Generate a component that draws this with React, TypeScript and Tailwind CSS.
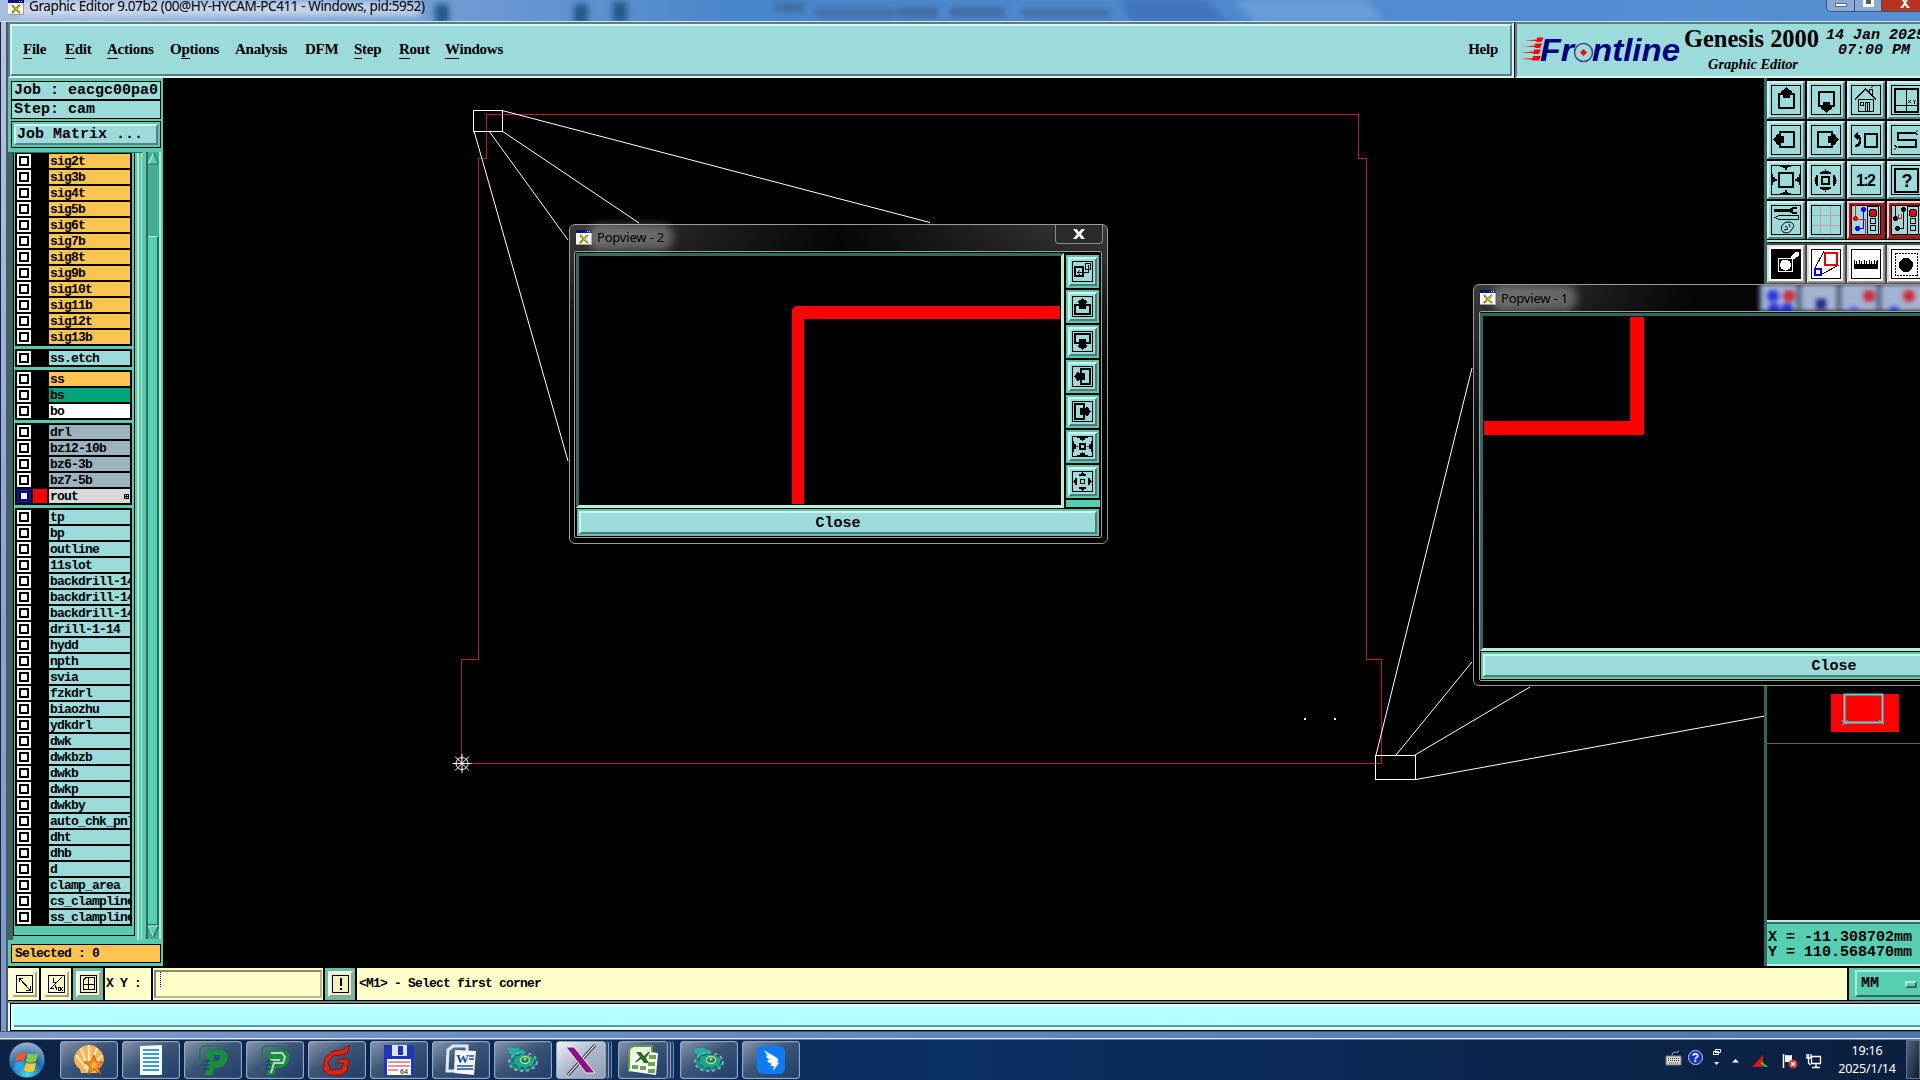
import React from 'react';

interface Layer {
  name: string;
  color: string;
  active?: boolean;
}

const SIG = 'bg-[#fdc44f]';
const AQUA = 'bg-[#9ddbdb]';
const GREY = 'bg-[#9ab3bd]';

const layerGroups: Layer[][] = [
  ['sig2t', 'sig3b', 'sig4t', 'sig5b', 'sig6t', 'sig7b', 'sig8t', 'sig9b', 'sig10t', 'sig11b', 'sig12t', 'sig13b'].map(
    (name) => ({ name, color: SIG })
  ),
  [{ name: 'ss.etch', color: AQUA }],
  [
    { name: 'ss', color: SIG },
    { name: 'bs', color: 'bg-[#00a57c]' },
    { name: 'bo', color: 'bg-white' },
  ],
  [
    { name: 'drl', color: GREY },
    { name: 'bz12-10b', color: GREY },
    { name: 'bz6-3b', color: GREY },
    { name: 'bz7-5b', color: GREY },
    { name: 'rout', color: 'bg-[#d9d9d9]', active: true },
  ],
  [
    'tp', 'bp', 'outline', '11slot', 'backdrill-14', 'backdrill-14', 'backdrill-14', 'drill-1-14', 'hydd', 'npth',
    'svia', 'fzkdrl', 'biaozhu', 'ydkdrl', 'dwk', 'dwkbzb', 'dwkb', 'dwkp', 'dwkby', 'auto_chk_pnl', 'dht', 'dhb',
    'd', 'clamp_area', 'cs_clampline', 'ss_clampline',
  ].map((name) => ({ name, color: AQUA })),
];

const menus = [
  { label: 'File', key: 0, width: 'w-[42px]' },
  { label: 'Edit', key: 0, width: 'w-[42px]' },
  { label: 'Actions', key: 0, width: 'w-[63px]' },
  { label: 'Options', key: 1, width: 'w-[65px]' },
  { label: 'Analysis', key: -1, width: 'w-[70px]' },
  { label: 'DFM', key: -1, width: 'w-[49px]' },
  { label: 'Step', key: 0, width: 'w-[45px]' },
  { label: 'Rout', key: 0, width: 'w-[46px]' },
  { label: 'Windows', key: 0, width: 'w-[70px]' },
];

/* ---------- toolbar glyphs, drawn on a 38px cell ---------- */

const Up = () => (
  <>
    <path d="M16 13H12V27H27V13H23" fill="none" stroke="#000" strokeWidth="2" />
    <path d="M19 6h1v1h1v1h1v1h2v1h1v2h-2v5h-7v-5h-2v-2h1v-1h2v-1h1v-1h1z" />
  </>
);

const Down = () => (
  <g transform="matrix(1 0 0 -1 0 38)">
    <Up />
  </g>
);

const Left = () => (
  <g transform="matrix(0 1 1 0 0 -1)">
    <Up />
  </g>
);

const Right = () => (
  <g transform="matrix(0 1 -1 0 38 -1)">
    <Up />
  </g>
);

const House = () => (
  <g fill="none" stroke="#000">
    <path d="M8 18.500L18.500 8L29 18.500M22.500 11V8.500h3V15M24 7l2-2" />
    <path d="M11.500 18v12.500h15V18M11 18.500h16M13.500 21.500h3v3h-3zM18.500 30v-8.500h4V30M20.500 22v8" />
  </g>
);

const Sheet = () => (
  <>
    <path d="M8 8h23v23H8z" fill="none" stroke="#000" strokeWidth="2" />
    <path d="M19.500 8v23M8 24.500h23" stroke="#000" />
    <path d="M21 19l3 3M24 19l-3 3M26 19l1.500 1.500L29 19M27.500 20v2.500" stroke="#000" fill="none" />
  </>
);

const Undo = () => (
  <>
    <path d="M18 13h12v13H18z" fill="none" stroke="#000" strokeWidth="2" />
    <path d="M9 15h3v2h1v5h-1v2h-2v1H8" fill="none" stroke="#000" strokeWidth="2.500" />
    <path d="M6 15l5-4v8z" />
  </>
);

const Snake = () => (
  <>
    <path d="M28 12H11v7h18v7H11" fill="none" stroke="#000" strokeWidth="2" />
    <path d="M28 12l3-3M28 12l3 2M10 26l-3-2M10 26l-3 3" stroke="#000" />
  </>
);

const ZoomOutAll = () => (
  <>
    <path d="M12 12h14v14H12z" fill="none" stroke="#000" strokeWidth="2" />
    <path d="M13 5h11v1h-3v1h-1v2h-2V7h-2V6h-3zM13 33h11v-1h-3v-1h-1v-2h-2v2h-2v1h-3zM5 13v11h1v-3h2v-1h2v-2H8v-2H6v-3zM33 13v11h-1v-3h-2v-1h-2v-2h2v-2h2v-3z" />
  </>
);

const Spread = () => (
  <>
    <path d="M15 16h7v7h-7z" fill="none" stroke="#000" strokeWidth="2" />
    <path d="M18 8h1v2h3v1h2v2H13v-2h2v-1h3zM18 31h1v-2h3v-1h2v-2H13v2h2v1h3zM7 19h1v-3h1v-2h2v11H9v-2H8v-3H7zM30 19h-1v-3h-1v-2h-2v11h2v-2h1v-3h1z" />
  </>
);

const Ratio = () => (
  <text x="9" y="25" fontSize="16" fontWeight="bold" fontFamily="Liberation Sans, sans-serif" textLength="20">
    1:2
  </text>
);

const Ask = () => (
  <>
    <path d="M8 8h23v23H8z" fill="none" stroke="#000" strokeWidth="2" />
    <text x="20" y="26" textAnchor="middle" fontSize="18" fontWeight="bold" fontFamily="Liberation Sans, sans-serif">
      ?
    </text>
  </>
);

const Tools = () => (
  <>
    <path d="M7 8h16v-1h2V6h5v2h-4v3h4v2h-5v-1h-2v-1H7z" />
    <path d="M8 16.500l4-2h19v4H12z" fill="none" stroke="#000" />
    <path
      d="M16 31c-4-4 0-10 5-10c6 0 7 4 4 7c-1 3-5 5-9 3zM18 25l3 2M22 23l1 3M17 29l4-1"
      fill="none"
      stroke="#000"
      shapeRendering="auto"
    />
  </>
);

const Grid = () => (
  <path d="M13.500 5v28M23.500 5v28M5 14.500h28M5 24.500h28" stroke="#c69aa8" fill="none" />
);

const Lights = () => (
  <>
    <path d="M20.500 5.500h11v28h-11z" fill="#9ddbdb" stroke="#000" />
    <circle cx="26" cy="12" r="4" fill="#e00" stroke="#000" />
    <circle cx="26" cy="20" r="3" fill="none" stroke="#000" />
    <circle cx="26" cy="27" r="3" fill="none" stroke="#000" />
  </>
);

const NetShort = () => (
  <>
    <path d="M8.500 4v15M8 18.500h10V34" stroke="#e02020" fill="none" />
    <path d="M16.500 9v18M10 27.500h7" stroke="#00f" fill="none" />
    <circle cx="16.500" cy="8.500" r="2.500" fill="#00f" />
    <circle cx="10.500" cy="27.500" r="2.500" fill="#00f" />
    <circle cx="8.500" cy="17.500" r="2.500" fill="#f00" />
    <Lights />
  </>
);

const NetSpacing = () => (
  <>
    <path d="M8.500 4v15M16.500 9v18M10 27.500h7" stroke="#000" fill="none" />
    <path d="M10 17.500h5M11.500 13v5M14.500 13v5" stroke="#e02020" />
    <circle cx="16.500" cy="8.500" r="2.500" />
    <circle cx="10.500" cy="27.500" r="2.500" />
    <circle cx="8.500" cy="17.500" r="2.500" />
    <Lights />
  </>
);

const PadPick = () => (
  <>
    <path d="M5 5h28v28H5z" />
    <path d="M11.500 13.500h14v13h-14z" fill="none" stroke="#fff" />
    <circle cx="18.500" cy="20" r="5.500" fill="#fff" />
    <path d="M23 12l5-5h4v4l-5 3z" fill="#fff" />
  </>
);

const Popup = () => (
  <>
    <path d="M8 23l9-17M15 29l17-9" stroke="#000" />
    <path d="M18 8h12v12H18z" fill="#fff" stroke="#e00" strokeWidth="2" />
    <path d="M8 24h6v6H8z" fill="#fff" stroke="#00f" strokeWidth="2" />
  </>
);

const Ruler = () => (
  <path d="M7 15h1v4h1v-3h1v3h2v-4h1v4h1v-3h1v3h2v-4h1v4h1v-3h1v3h2v-4h1v4h1v-3h1v3h2v-4h1v4h1v-3h1v-1h1v9H7z" />
);

const PadDash = () => (
  <>
    <path d="M8.500 8.500h22v22h-22z" fill="none" stroke="#000" strokeDasharray="2 1" />
    <circle cx="19" cy="20" r="7" />
  </>
);

const toolbar = [Up, Down, House, Sheet, Left, Right, Undo, Snake, ZoomOutAll, Spread, Ratio, Ask, Tools, Grid];

const ToolCell = ({ icon: Icon, tone = 'aqua' }: { icon: React.FC; tone?: 'aqua' | 'red' | 'white' }) => {
  const bevel = {
    aqua: 'bg-[#9ddbdb] border-t-[#d3f1f1] border-l-[#d3f1f1] border-b-[#567f7f] border-r-[#567f7f]',
    red: 'bg-[#9ddbdb] border-t-[#efd2d2] border-l-[#efd2d2] border-b-[#8c2020] border-r-[#8c2020]',
    white: 'bg-white border-t-[#e8e8e8] border-l-[#d8d8d8] border-b-[#8f8f8f] border-r-[#8f8f8f]',
  }[tone];
  return (
    <div className={`w-[38px] h-[38px] shrink-0 border-2 ${bevel}`}>
      <svg className="-m-[2px] block" width="38" height="38" viewBox="0 0 38 38" shapeRendering="crispEdges">
        {tone === 'red' && <path d="M3.500 3.500h31v31h-31z" fill="none" stroke="#b81414" strokeWidth="3" />}
        <path d="M4.500 4.500h29v29h-29z" fill="none" stroke="#000" />
        <Icon />
      </svg>
    </div>
  );
};

/* ---------- popview side buttons, drawn on a 33px cell ---------- */

const PopArrow = () => (
  <>
    <path d="M13 15H9V24H24V15H20" fill="none" stroke="#000" strokeWidth="2" />
    <path d="M16 8h1v1h1v1h2v1h1v2h-1v6h-7v-6h-1v-2h1v-1h2V9h1z" />
  </>
);

const PopIcons: React.FC[] = [
  () => (
    <>
      <path d="M9 12h8v9H9z" fill="none" stroke="#000" strokeWidth="2" />
      <path d="M19.500 8.500h5v6h-5zM22.500 10v7.500H12M14 15l-2 2.500l2 2.500" fill="none" stroke="#000" />
    </>
  ),
  () => <PopArrow />,
  () => <g transform="matrix(1 0 0 -1 0 33)"><PopArrow /></g>,
  () => <g transform="matrix(0 1 1 0 0 0)"><PopArrow /></g>,
  () => <g transform="matrix(0 1 -1 0 33 0)"><PopArrow /></g>,
  () => (
    <>
      <path d="M14 14h5v5h-5z" fill="none" stroke="#000" strokeWidth="2" />
      <path d="M11 7h11v1h-3v2h-2v1h-1v-1h-2V8h-3zM11 26h11v-1h-3v-2h-2v-1h-1v1h-2v2h-3zM7 11v11h1v-3h2v-2h2v-1h-2v-2H8v-3zM26 11v11h-1v-3h-2v-2h-2v-1h2v-2h2v-3z" />
    </>
  ),
  () => (
    <>
      <path d="M14.500 14.500h4v4h-4z" fill="none" stroke="#000" />
      <path d="M16 7h1v1h1v1h2v2h-7V9h2V8h1zM16 26h1v-1h1v-1h2v-2h-7v2h2v1h1zM7 16v1h1v1h1v2h2v-7H9v2H8v1zM26 16v1h-1v1h-1v2h-2v-7h2v2h1v1z" />
    </>
  ),
];

const XIcon = () => (
  <svg width="16" height="15" viewBox="0 0 16 15" className="shrink-0">
    <path d="M0 0h16v15H0z" fill="#f8f8f4" />
    <path d="M0 0h16v3H0z" fill="#10107c" />
    <path d="M11 1h1v1h-1zM13 1h1v1h-1z" fill="#ddd" />
    <path d="M4 5l8 8M12 5l-8 8" stroke="#6d7418" strokeWidth="2.200" />
    <path d="M4.500 5l7.500 7.500M12 5.500l-7 7" stroke="#f0e22a" />
    <path d="M0 14.500h16M15.500 3v12" stroke="#999" />
  </svg>
);

const GlassTitle = ({ title }: { title: string }) => (
  <>
    <XIcon />
    <span className="ml-[5px] whitespace-nowrap rounded-full bg-white/30 shadow-[0_0_9px_9px_rgba(255,255,255,0.3)] font-['Noto_Sans',sans-serif] text-[13px] leading-[8px] tracking-[-0.2px] text-black">
      {title}
    </span>
  </>
);

const CloseBar = () => (
  <div className="h-[27px] border-2 border-[#62c3a9] mx-px">
    <div className="h-full bg-[#9ddbdb] border-2 border-t-[#c4fff2] border-l-[#c4fff2] border-b-[#4c7c7c] border-r-[#4c7c7c] flex items-center justify-center pt-px font-['Liberation_Mono',monospace] font-bold text-[15px] leading-none">
      Close
    </div>
  </div>
);

const PopviewTwo = () => (
  <div className="absolute left-[569px] top-[224px] w-[539px] h-[320px] rounded-[6px] border border-[#9a9a9a] bg-linear-to-b from-[#3a3a3a] via-[#141414] via-30% to-black pl-[4px] pr-[5px] pb-[5px] flex flex-col">
    <div className="relative h-[26px] shrink-0 flex items-center pl-[2px] pr-px pb-[2px] bg-linear-to-r from-transparent via-black/90 to-transparent">
      <GlassTitle title="Popview - 2" />
      <div className="ml-auto -mr-[2px] self-start h-[19px] w-[48px] rounded-b-[4px] border border-t-0 border-[#8b8b8b] bg-[#2b2b2b] flex items-center justify-center">
        <svg width="12" height="10" viewBox="0 0 12 10">
          <path d="M0 0h3.500L6 3L8.500 0H12L8 5l4 5H8.500L6 7L3.500 10H0l4-5z" fill="#fff" />
        </svg>
      </div>
    </div>
    <div className="flex-1 border border-[#a0a0a0] rounded-[2px] bg-black p-px flex flex-col gap-[1px]">
      <div className="flex h-[255px] gap-[2px]">
        <div className="w-[488px] h-[255px] border-3 border-t-[#2f6b60] border-l-[#2f6b60] border-b-[#b6efdf] border-r-[#b6efdf]">
          <svg width="482" height="249" viewBox="579 256 482 249" shapeRendering="crispEdges">
            <path d="M1060 306H796l-2 1l-1 1l-1 2V504h12V319h256z" fill="#f00" />
          </svg>
        </div>
        <div className="flex flex-col gap-[2px] pt-[2px]">
          {PopIcons.map((Icon, i) => (
            <div key={i} className="w-[33px] h-[33px] bg-[#9ddbdb] border-2 border-[#62c3a9]">
              <svg className="-m-[2px] block" width="33" height="33" viewBox="0 0 33 33" shapeRendering="crispEdges">
                <path d="M2 31V2h29l-2 2H4v25z" fill="#c4fff2" />
                <path d="M31 2v29H2l2-2h25V4z" fill="#4c7c7c" />
                <path d="M6.500 6.500h20v20h-20z" fill="none" stroke="#000" />
                <Icon />
              </svg>
            </div>
          ))}
          <div className="h-[7px] bg-[#56ceb1] -mr-px" />
        </div>
      </div>
      <CloseBar />
    </div>
  </div>
);

const PopviewOne = () => (
  <div className="absolute left-[1473px] top-[284px] w-[723px] h-[402px] rounded-[6px] border border-[#9a9a9a] bg-linear-to-b from-[#3a3a3a] via-[#141414] via-30% to-black px-[5px] pb-[5px] flex flex-col">
    <div className="h-[26px] shrink-0 flex items-center px-[1px] pb-px bg-linear-to-r from-transparent via-black/90 via-30% to-black overflow-hidden">
      <GlassTitle title="Popview - 1" />
      {/* toolbar showing through the glass */}
      <div className="ml-auto mr-[260px] h-[27px] w-[170px] bg-[#a3b4d0] blur-[2px]">
        <svg width="170" height="28" viewBox="0 0 170 28">
          <path d="M0 0v28M40 0v28M80 0v28M120 0v28" stroke="#5f6f8e" strokeWidth="6" />
          <circle cx="14" cy="12" r="6" fill="#2836e0" />
          <circle cx="30" cy="12" r="6" fill="#d0283c" />
          <circle cx="15" cy="25" r="6" fill="#2836e0" />
          <circle cx="28" cy="25" r="6" fill="#2836e0" />
          <path d="M57 15h10v10H57z" fill="#20268a" />
          <circle cx="110" cy="12" r="6" fill="#d0283c" />
          <circle cx="95" cy="27" r="5" fill="#5866e0" />
          <circle cx="150" cy="12" r="6" fill="#d0283c" />
          <circle cx="135" cy="27" r="5" fill="#3846e0" />
        </svg>
      </div>
    </div>
    <div className="flex-1 border border-[#a0a0a0] rounded-[2px] bg-black p-px pl-0 flex flex-col gap-[1px]">
      <div className="h-[338px] border-3 border-t-[#2f6b60] border-l-[#2f6b60] border-b-[#b6efdf] border-r-[#b6efdf]">
        <svg width="440" height="331" viewBox="1483 316 440 331" shapeRendering="crispEdges">
          <path d="M1630 317h14V433l-2 2H1484V421h146z" fill="#f00" />
        </svg>
      </div>
      <CloseBar />
    </div>
  </div>
);

const TitleBar = () => (
  <div className="relative h-[22px] shrink-0 flex items-start overflow-hidden bg-linear-to-r from-[#a9bede] via-[#4a86cb] via-38% to-[#5490d2] border-b border-[#cfe0f4]">
    <svg className="absolute inset-0" width="1920" height="22">
      <defs>
        <filter id="soft" x="-20%" y="-80%" width="140%" height="260%">
          <feGaussianBlur stdDeviation="3" />
        </filter>
      </defs>
      <g filter="url(#soft)">
        <path d="M435 4h14v20h-14zM574 4h14v20h-14zM613 2h14v20h-14z" fill="#235a86" />
        <path d="M775 3h30v9h-30zM815 9h80v8h-80zM898 7h40v11h-40zM950 7h55v10h-55zM1022 9h88v8h-88z" fill="#3c6696" opacity=".8" />
        <path d="M1120 0h85l25 22h-100z" fill="#3566ad" opacity=".6" />
        <path d="M1235 0h130l20 22h-130z" fill="#76a5de" opacity=".7" />
        <path d="M20 2h400v14H20z" fill="#dfe8f5" opacity=".7" />
      </g>
    </svg>
    <div className="relative flex h-[15px] items-center pl-[8px]">
      <XIcon />
      <span className="ml-[5px] h-[15px] whitespace-nowrap font-['Noto_Sans',sans-serif] text-[13.5px] leading-[12px] tracking-[-0.4px] text-black">
        Graphic Editor 9.07b2 (00@HY-HYCAM-PC411 - Windows, pid:5952)
      </span>
    </div>
    <div className="relative ml-auto flex h-[12px] w-[94px] shrink-0 rounded-bl-[5px] border border-t-0 border-r-0 border-[#39537c] overflow-hidden">
      <div className="w-[28px] border-r border-[#39537c] bg-[#8aa9d4] flex justify-center pt-[3px]">
        <div className="h-[4px] w-[12px] bg-white border border-[#667]" />
      </div>
      <div className="w-[27px] border-r border-[#39537c] bg-[#8aa9d4] flex justify-center">
        <div className="h-[7px] w-[11px] border-3 border-t-0 border-white bg-[#556]" />
      </div>
      <div className="flex-1 bg-[#b8321f] flex justify-center pl-[8px]">
        <svg width="12" height="8" viewBox="0 0 12 8">
          <path d="M1 8l4-5L3 0h2.500L6 1L7 0h2L7 3l4 5H8L6 5L4 8z" fill="#fff" />
        </svg>
      </div>
    </div>
  </div>
);

const MenuBar = () => (
  <div className="flex h-[56px] w-[1506px] shrink-0 border-2 border-t-[#567f7f] border-l-[#567f7f] border-b-[#d9f3f3] border-r-[#d9f3f3]">
    <div className="flex flex-1 items-center bg-[#9ddbdb] border-2 border-t-[#d9f3f3] border-l-[#d9f3f3] border-b-[#567f7f] border-r-[#567f7f] pl-[11px] pr-[12px] pb-[2px] font-['Liberation_Serif',serif] font-bold text-[15px] leading-[17px] tracking-[-0.25px]">
      {menus.map((m) => (
        <span key={m.label} className={`${m.width} whitespace-nowrap`}>
          {m.key < 0 ? (
            m.label
          ) : (
            <>
              {m.label.slice(0, m.key)}
              <span className="border-b border-black pb-px">{m.label[m.key]}</span>
              {m.label.slice(m.key + 1)}
            </>
          )}
        </span>
      ))}
      <span className="ml-auto">Help</span>
    </div>
  </div>
);

const Brand = () => (
  <div className="ml-px min-w-0 flex-1 h-[56px] overflow-hidden bg-[#9ddbdb] border-2 border-r-0 border-t-[#567f7f] border-l-[#567f7f] border-b-[#d9f3f3]">
    <svg width="403" height="52" viewBox="1517 24 403 52">
      <g fill="#f00">
        <path d="M1525 40.500l12-1v-2h6.500l-2 4.500h-5v-1z" />
        <path d="M1523 46.500l12-1v-2h7l-2 4.500h-5v-1z" />
        <path d="M1521 52.500l13-1v-2h7l-2 4.500h-6v-1z" />
        <path d="M1521 59l12-1v-2h8l-2 4.500h-7v-1z" />
      </g>
      <g fill="#00007c" fontFamily="Liberation Sans, sans-serif" fontWeight="bold" fontStyle="italic" fontSize="31">
        <text x="1540" y="60.500" textLength="34" lengthAdjust="spacingAndGlyphs">Fr</text>
        <text x="1592" y="60.500" textLength="88" lengthAdjust="spacingAndGlyphs">ntline</text>
      </g>
      <circle cx="1583.500" cy="52.500" r="9" fill="#9ddbdb" stroke="#3a4a8c" strokeWidth="1.500" />
      <path d="M1583.500 49l3.500 3.500l-3.500 3.500l-3.500-3.500z" fill="#f00" />
      <text x="1684" y="46.500" fontFamily="Liberation Serif, serif" fontWeight="bold" fontSize="24.500" textLength="135">
        Genesis 2000
      </text>
      <text x="1708" y="69" fontFamily="Liberation Serif, serif" fontWeight="bold" fontStyle="italic" fontSize="14.500" textLength="90">
        Graphic Editor
      </text>
      <g fontFamily="Liberation Mono, monospace" fontWeight="bold" fontStyle="italic" fontSize="15">
        <text x="1826" y="39">14 Jan 2025</text>
        <text x="1838" y="54">07:00 PM</text>
      </g>
    </svg>
  </div>
);

const LayerRow = ({ layer }: { layer: Layer }) => (
  <div className="flex h-[14px] gap-[2px]">
    <div className={`w-[14px] flex items-center justify-center ${layer.active ? 'bg-[#1010a0]' : 'bg-white'}`}>
      <div className={`h-[10px] w-[10px] border-2 bg-white ${layer.active ? 'border-[#000060]' : 'border-black'}`} />
    </div>
    <div className={`w-[14px] ${layer.active ? 'bg-[#f00]' : 'bg-black'}`} />
    <div
      className={`flex w-[81px] overflow-hidden whitespace-nowrap pl-px font-['Liberation_Mono',monospace] text-[13px] font-bold leading-[15px] tracking-[-0.8px] ${layer.color}`}
    >
      {layer.name}
      {layer.active && (
        <svg className="ml-auto mr-px mt-[5px]" width="5" height="5" viewBox="0 0 5 5" shapeRendering="crispEdges">
          <path d="M.5.500h4v4h-4zM2.500 0v5M0 2.500h5" fill="none" stroke="#000" />
        </svg>
      )}
    </div>
  </div>
);

const Sidebar = () => (
  <div className="flex h-[888px] w-[155px] shrink-0 flex-col bg-[#5cc8ae] pt-[3px]">
    <div className="ml-[3px] w-[150px] font-['Liberation_Mono',monospace] font-bold text-[15px] leading-[18px]">
      <div className="h-[19px] border border-black bg-[#9ddbdb] pl-[2px] whitespace-nowrap">Job : eacgc00pa0</div>
      <div className="h-[19px] border border-black bg-[#9ddbdb] pl-[2px]">Step: cam</div>
      <div className="mt-[2px] h-[27px] border border-black p-[2px]">
        <div className="h-[21px] border-2 border-t-[#d3f1f1] border-l-[#d3f1f1] border-b-[#567f7f] border-r-[#567f7f] bg-[#9ddbdb] pl-[1px]">
          Job Matrix ...
        </div>
      </div>
    </div>
    <div className="mt-[4px] flex h-[788px]">
      <div className="flex w-[134px] border-t border-[#2f6b60]">
        <div className="w-[5px] bg-[#3a665c]" />
        <div className="flex h-[783px] w-[122px] flex-col gap-[3px] overflow-hidden border-x border-b border-black pl-px">
          {layerGroups.map((group, i) => (
            <div key={i} className={`flex w-[117px] flex-col gap-[2px] bg-black p-[2px] ${i === 0 ? 'pt-px' : ''}`}>
              {group.map((layer, j) => (
                <LayerRow key={j} layer={layer} />
              ))}
            </div>
          ))}
        </div>
        <div className="ml-[2px] w-[2px] bg-[#a8ecd6]" />
        <div className="ml-[2px] w-px bg-[#a8ecd6]" />
      </div>
      <div className="ml-[4px] flex h-[787px] w-[15px] flex-col border-l-2 border-r-2 border-l-[#2f6b60] border-r-[#a8ecd6] bg-[#45ad96]">
        <svg width="11" height="13" viewBox="0 0 11 13">
          <path d="M5.500 1L10.500 12H.5z" fill="#56ceb1" />
          <path d="M5.500 1L.5 12" stroke="#a8ecd6" strokeWidth="1.500" />
          <path d="M5.500 1l5 11H.5" stroke="#2f6b60" fill="none" />
        </svg>
        <div className="mt-[71px] h-[689px] border-t border-r-2 border-b border-t-[#a8ecd6] border-r-[#2f6b60] border-b-[#2f6b60] bg-[#56ceb1]" />
        <svg width="11" height="13" viewBox="0 0 11 13">
          <path d="M.5 1h10L5.500 12z" fill="#56ceb1" />
          <path d="M10.500 1H.5L5.500 12" stroke="#a8ecd6" fill="none" />
          <path d="M5.500 12l5-11" stroke="#2f6b60" strokeWidth="1.500" />
        </svg>
      </div>
    </div>
    <div className="ml-[3px] mt-[4px] h-[19px] w-[150px] border border-black bg-[#fdc44f] pl-[3px] font-['Liberation_Mono',monospace] text-[13px] font-bold leading-[17px] tracking-[-0.8px]">
      Selected : 0
    </div>
  </div>
);

const Canvas = () => (
  <svg className="shrink-0 bg-black" width="1601" height="888" viewBox="163 78 1601 888">
    <path
      d="M486.500 114.500H1358.500V158.500H1366.500V659.500H1381.500V763.500H461.500V659.500H478.500V158.500H486.500Z"
      fill="none"
      stroke="#c01c1c"
      shapeRendering="crispEdges"
    />
    <g stroke="#fff" fill="none">
      <path d="M473.500 110.500h29v21h-29zM1375.500 755.500h40v24h-40z" shapeRendering="crispEdges" />
      <path d="M502 110.500L930 222.500M502 131L639 223M489 131L568 240M474 131L568 461" />
      <path d="M1376 755L1472 368M1396 755L1472 662M1415 755L1530 687M1416 779.500L1765 716" />
      <circle cx="462" cy="763.500" r="6" />
      <path d="M462 754v19M452.500 763.500h19M455 756.500l14 14M469 756.500l-14 14" />
    </g>
    <path d="M1304 718h2v2h-2zM1334 718h2v2h-2z" fill="#fff" />
  </svg>
);

const RightPanel = () => (
  <div className="flex h-[888px] min-w-0 flex-1 flex-col overflow-hidden border-l-3 border-[#2f6b60] bg-black">
    <div className="grid grid-cols-[repeat(4,38px)] gap-[2px] pt-[3px]">
      {toolbar.map((icon, i) => (
        <ToolCell key={i} icon={icon} />
      ))}
      <ToolCell icon={NetShort} tone="red" />
      <ToolCell icon={NetSpacing} tone="red" />
    </div>
    <div className="mt-px h-[2px] bg-[#b6efdf]" />
    <div className="mt-[1px] grid grid-cols-[repeat(4,38px)] gap-[2px] bg-[#4a4a4a] pt-[2px] pb-[40px]">
      {[PadPick, Popup, Ruler, PadDash].map((icon, i) => (
        <ToolCell key={i} icon={icon} tone="white" />
      ))}
    </div>
    {/* overview map */}
    <div className="mt-auto h-[57px] shrink-0">
      <svg width="153" height="57" viewBox="1767 686 153 57">
        <path d="M1831 694h68v38h-68z" fill="#f00" />
        <path d="M1844.500 694.500h38v28h-38z" fill="none" stroke="#3fe0e0" strokeWidth="2" />
        <path d="M1841 726l7-6M1841 720l6 5M1879 720l5 4" stroke="#9aa" />
      </svg>
    </div>
    <div className="h-[177px] shrink-0 border-t border-[#3f7a3a]" />
    <div className="h-[46px] shrink-0 border-y-2 border-y-[#b6efdf] bg-[#56ceb1]">
      <div className="h-full border-t-2 border-[#2f6b60] pl-px pt-[6px] font-['Liberation_Mono',monospace] text-[15px] font-bold leading-[15px] whitespace-pre">
        X = -11.308702mm{'\n'}Y = 110.568470mm
      </div>
    </div>
  </div>
);

const StatusButton = ({ teal, children }: { teal?: boolean; children: React.ReactNode }) => (
  <div className={`flex h-[32px] w-[32px] shrink-0 items-center justify-center border-r-2 border-black ${teal ? 'bg-[#62c3a9]' : 'bg-[#ffffca]'}`}>
    <div className={`h-[26px] w-[25px] border-2 border-t-[#fffff0] border-l-[#fffff0] border-b-[#a5a585] border-r-[#a5a585] ${teal ? 'bg-[#f2f2c0]' : 'bg-[#ffffca]'}`}>
      <svg className="block" width="21" height="22" viewBox="0 0 21 22" fill="none" stroke="#000" shapeRendering="crispEdges">
        {children}
      </svg>
    </div>
  </div>
);

const StatusBar = () => (
  <div className="mt-[2px] flex h-[33px] shrink-0 border-b border-black bg-[#ffffca] pl-px font-['Liberation_Mono',monospace] text-[13px] font-bold tracking-[-0.8px]">
    <StatusButton>
      <path d="M2.500 2.500h16v17h-16zM5 5l11 12M5.500 9V5.500H9M16 13v4h-4" />
    </StatusButton>
    <StatusButton>
      <path d="M2.500 2.500h16v17h-16zM5 15L16 4M4 15.500h4M7.500 5v4h2M9 12l2 5M12 14h2v3h-2zM17 14l-2 2l2 2" />
    </StatusButton>
    <StatusButton teal>
      <path d="M2.500 2.500h16v17h-16zM8 4.500h8v12H5v-9zM10.500 4v13M5 11.500h11" />
    </StatusButton>
    <div className="flex w-[46px] shrink-0 items-center pl-[1px] whitespace-pre">X Y :</div>
    <div className="h-[33px] w-[174px] shrink-0 border-x-2 border-black p-[1px] pt-[2px]">
      <div className="h-[28px] border-2 border-t-[#8a8a6c] border-l-[#8a8a6c] border-b-[#b5b594] border-r-[#b5b594] bg-[#ffffca] pl-[4px]">
        <div className="h-[15px] w-0 border-l border-dotted border-black" />
      </div>
    </div>
    <StatusButton teal>
      <path d="M2.500 2.500h16v17h-16z" />
      <path d="M10.500 5v8M10.500 15v2" strokeWidth="2" />
    </StatusButton>
    <div className="flex flex-1 items-center pl-[2px] whitespace-pre">&lt;M1&gt; - Select first corner</div>
    <div className="w-[73px] shrink-0 border-l-2 border-black bg-[#5cc8ae] py-[2px] pl-[6px]">
      <div className="flex h-[27px] items-center border-2 border-r-0 border-t-[#a8ecd6] border-l-[#a8ecd6] border-b-[#2f6b60] bg-[#56ceb1] pt-px pl-[4px] text-[15px] tracking-normal">
        MM
        <div className="ml-[26px] h-[7px] w-[12px] border-2 border-t-[#a8ecd6] border-l-[#a8ecd6] border-b-[#2f6b60] border-r-[#2f6b60]" />
      </div>
    </div>
  </div>
);

/* ---------- taskbar ---------- */

const Shell = () => (
  <svg width="34" height="34" viewBox="0 0 34 34">
    <path d="M9 30l-1-4c-6-4-7-10-5-14c3-7 9-10 14-10s11 3 14 10c2 4 1 10-5 14l-1 4z" fill="#f5b65a" />
    <path d="M17 29L4 12M17 29L9 5M17 29V2M17 29l8-24M17 29l13-17" stroke="#fde7b2" strokeWidth="2" />
    <path d="M22 12l2.500 7l7 0l-5.500 4.500l2.500 7.500l-6.500-4.500l-6 4.500l2-7.500l-6-4.500h7.500z" fill="#f58a1a" stroke="#c35f0a" />
    <circle cx="22" cy="22" r="3" fill="#f9b050" />
  </svg>
);

const Note = () => (
  <svg width="26" height="32" viewBox="0 0 26 32">
    <path d="M2 2l22-1v30H2z" fill="#f3f9fd" />
    <path d="M5 6h16M5 10h16M5 14h16M5 18h16M5 22h16M5 26h16" stroke="#3d9ad0" strokeWidth="2" />
  </svg>
);

/* green P with a thin bracket behind it */
const PIcon = ({ light }: { light?: boolean }) => (
  <svg width="34" height="34" viewBox="0 0 34 34">
    <path d="M4 21V6l3-3h19" fill="none" stroke="#17803c" strokeWidth="1.500" />
    <path
      d="M10 10l3-3h10c7 0 10 4 8 10s-6 8-11 8h-2l-2 7h-7l4-16h-2z"
      fill="#16903f"
    />
    {light ? (
      <>
        <path d="M13 10h11l3 4l-2 6h-9l-3 10" fill="none" stroke="#b9d4c6" strokeWidth="2" />
        <path d="M12 17h10" stroke="#b9d4c6" strokeWidth="2" />
      </>
    ) : (
      <path d="M18 12h6c1 3-1 7-7 7z" fill="#2c4f78" />
    )}
    <path d="M8 18h7M7 22h7M7 26h6" stroke="#1b3a64" />
  </svg>
);

const GIcon = () => (
  <svg width="34" height="34" viewBox="0 0 34 34">
    <path d="M30 2l-3 9l-14 2l-5 6l2 8l11-1l3-6h-7l2-4h10l-2 12l-6 4H9l-6-5l2-12l8-7l9-1z" fill="#d8260f" stroke="#8c1206" />
  </svg>
);

const Floppy = () => (
  <svg width="32" height="34" viewBox="0 0 32 34">
    <path d="M1 2h28l2 2v28H1z" fill="#1c37b8" />
    <path d="M9 2h15v11H9z" fill="#dfe3ea" />
    <path d="M15 3h5v9h-5z" fill="#1c37b8" />
    <path d="M4 16h24v16H4z" fill="#fff" />
    <path d="M5 19h22M5 23h22M5 27h10" stroke="#cf2a3a" />
    <text x="17" y="31" fontSize="7" fontWeight="bold" fill="#555" fontFamily="Liberation Sans, sans-serif">64</text>
  </svg>
);

const Word = () => (
  <svg width="32" height="32" viewBox="0 0 32 32">
    <path d="M3 6l5-4h14v22l-3 3H2z" fill="none" stroke="#dce9fa" strokeWidth="3" />
    <path d="M10 6l21 1l-2 24l-20-2z" fill="#f5f9ff" />
    <text x="11" y="19" fontSize="13" fontWeight="bold" fill="#1d4c9c" fontFamily="Liberation Serif, serif">W</text>
    <path d="M24 12h5M24 15h5M12 22h16M12 25h16" stroke="#1d4c9c" strokeWidth="1.500" />
  </svg>
);

const Disc = () => (
  <svg width="32" height="28" viewBox="0 0 32 28">
    <path d="M1 2h11v2h5v3l-4 2H6L2 7z" fill="#1cb3a6" />
    <ellipse cx="16" cy="16" rx="14" ry="9" fill="#17907f" stroke="#8fa6bb" strokeWidth="2" strokeDasharray="3 3" />
    <ellipse cx="17" cy="15" rx="11" ry="7" fill="#17a793" stroke="#1b2d55" strokeDasharray="4 3" />
    <ellipse cx="18" cy="14" rx="4.500" ry="3.500" fill="#0f7a74" stroke="#d8cf4c" strokeWidth="1.500" />
    <circle cx="18" cy="13" r="1.500" fill="#5fe0d0" />
  </svg>
);

const XLogo = () => (
  <svg width="32" height="32" viewBox="0 0 32 32">
    <path d="M30 1L3 31" stroke="#111" strokeWidth="3" />
    <path d="M30 1L3 31" stroke="#eee" strokeWidth="1.200" />
    <path d="M1 3h8l21 26h-9z" fill="#8b0f8b" stroke="#eee" />
  </svg>
);

const Excel = () => (
  <svg width="32" height="32" viewBox="0 0 32 32">
    <path d="M2 28V8c0-4 3-6 7-6h16v6" fill="#e8f3df" stroke="#5c9d3c" strokeWidth="2" />
    <path d="M8 6l23 3l-2 22l-27-4z" fill="#fbfdf8" />
    <path d="M22 11h7v4h-7zM21 18h7v4h-7zM13 22h6v4h-6zM21 25h7v4h-7zM5 21h6v4H5z" fill="#6aa64c" />
    <path d="M9 8h5l3 4l4-4h2l-4 6l3 5h-5l-3-4l-4 3H8l5-5z" fill="#2c6e1f" />
  </svg>
);

const Ding = () => (
  <svg width="28" height="28" viewBox="0 0 28 28">
    <rect width="28" height="28" rx="6" fill="#0a7cf5" />
    <path d="M7 4c5 4 10 5 14 9c1 2 0 3-1 4l2 0l-6 8l1-5l-4 0l2-2c-3-1-4-2-5-4l3 0c-3-2-4-3-4-5l3 1c-3-2-4-4-5-6z" fill="#fff" />
  </svg>
);

const TaskButton = ({ wide, active, stacked, children }: { wide?: boolean; active?: boolean; stacked?: boolean; children: React.ReactNode }) => (
  <div className="flex">
    <div
      className={`flex h-[38px] items-center justify-center rounded-[3px] border border-[#8ea3bd] shadow-[inset_0_0_1px_#cfdcec] ${wide ? 'w-[58px]' : 'w-[50px]'} ${
        active ? 'bg-linear-to-br from-[#f0f2f6] via-[#aeb9ca] to-[#8d9db5]' : 'bg-linear-to-br from-[#8796aa] via-[#3c5577] via-45% to-[#1f3e6c]'
      }`}
    >
      {children}
    </div>
    {stacked && (
      <>
        <div className="h-[38px] w-[3px] rounded-r-[3px] border-r border-[#8ea3bd] bg-[#2c4a74]" />
        <div className="h-[38px] w-[3px] rounded-r-[3px] border-r border-[#6d86a5] bg-[#24426c]" />
      </>
    )}
  </div>
);

const Tray = () => (
  <svg width="165" height="40" viewBox="1660 1040 165 40">
    <path d="M1666 1056h15v9h-15z" fill="#d5d5d0" stroke="#777" />
    <path d="M1668 1058.500h12M1668 1060.500h12M1669 1063h9" stroke="#444" strokeDasharray="1 1" />
    <path d="M1672 1055c1-5 4-1 7-4" stroke="#bbb" fill="none" />
    <circle cx="1695.500" cy="1057.500" r="7" fill="#1a2fc0" stroke="#c5cce8" />
    <text x="1695.500" y="1062" textAnchor="middle" fontSize="12" fontWeight="bold" fill="#fff" fontFamily="Liberation Sans, sans-serif">?</text>
    <path d="M1715.500 1049.500h5v3h-5zM1713.500 1051.500h5v3h-5z" fill="#0a2650" stroke="#fff" />
    <path d="M1714 1062h5l-2.500 3zM1732 1062.500h7l-3.500-3.500z" fill="#fff" />
    <path d="M1752 1067l11-12v12z" fill="#e01414" />
    <path d="M1761 1061l7 6h-3l-4-3z" fill="#1fd040" />
    <path d="M1783.500 1054v14" stroke="#fff" strokeWidth="1.500" />
    <path d="M1785 1055c3 0 4 1 7 0v7c-3 1-4 0-7 0z" fill="#fff" />
    <circle cx="1793" cy="1064" r="4.500" fill="#dc2f22" />
    <path d="M1791 1062l4 4M1795 1062l-4 4" stroke="#fff" strokeWidth="1.500" />
    <path d="M1811.500 1056.500h9v7h-9zM1816 1064v3M1812 1067.500h8M1808.500 1054v9l2 2M1807 1054v4h4v-4" fill="none" stroke="#fff" strokeWidth="1.300" />
  </svg>
);

const Taskbar = () => (
  <div className="flex h-[41px] shrink-0 items-start border-t border-[#6d7f95] bg-linear-to-r from-[#0b2244] via-[#0a2f63] to-[#0a1f3d]">
    <svg className="ml-[8px] shrink-0" width="38" height="40" viewBox="0 0 38 40">
      <defs>
        <radialGradient id="orb" cx=".5" cy=".9" r=".9">
          <stop offset="0" stopColor="#4fd6f5" />
          <stop offset=".5" stopColor="#1d6aa8" />
          <stop offset="1" stopColor="#9fb6cc" />
        </radialGradient>
      </defs>
      <circle cx="19" cy="20" r="18" fill="url(#orb)" stroke="#16304f" />
      <path d="M9 14c4-2 6-2 9-1l-2 8c-3-1-5-1-9 1z" fill="#ef5a26" />
      <path d="M20 13c3 2 6 2 10 0l-2 8c-4 2-7 2-10 0z" fill="#8cc83c" />
      <path d="M7 23c3-2 6-2 9-1l-2 8c-3-1-5-1-8 0z" fill="#2f9fe6" />
      <path d="M18 23c3 1 6 1 10 0l-2 8c-4 2-7 1-10-1z" fill="#fbc92c" />
    </svg>
    <div className="ml-[14px] flex gap-[4px] pt-px">
      <TaskButton wide><Shell /></TaskButton>
      <TaskButton wide><Note /></TaskButton>
      <TaskButton wide><PIcon /></TaskButton>
      <TaskButton wide><PIcon light /></TaskButton>
      <TaskButton wide><GIcon /></TaskButton>
      <TaskButton wide><Floppy /></TaskButton>
      <TaskButton wide><Word /></TaskButton>
      <TaskButton wide><Disc /></TaskButton>
    </div>
    <div className="ml-[4px] flex gap-[6px] pt-px">
      <TaskButton active stacked><XLogo /></TaskButton>
      <TaskButton stacked><Excel /></TaskButton>
    </div>
    <div className="ml-[6px] flex gap-[4px] pt-px">
      <TaskButton wide><Disc /></TaskButton>
      <TaskButton wide><Ding /></TaskButton>
    </div>
    <div className="ml-auto flex">
      <Tray />
      <div className="w-[81px] pt-[2px] pl-[3px] text-center font-['Noto_Sans',sans-serif] text-[12.5px] leading-[18px] tracking-[-0.2px] text-white">
        <div>19:16</div>
        <div>2025/1/14</div>
      </div>
      <div className="h-[39px] w-[14px] border border-[#5f7086] bg-linear-to-br from-[#54657c] to-[#0e1c30]" />
    </div>
  </div>
);

function App() {
  return (
    <div className="relative flex h-[1080px] w-[1920px] flex-col overflow-hidden bg-[#8ea9d6] text-black">
      <TitleBar />
      <div className="flex h-[1009px] shrink-0">
        <div className="w-[8px] shrink-0 border-l border-r-2 border-l-[#20242c] border-r-[#4b5870] bg-linear-to-b from-[#b4c6e4] via-[#8fa6d4] to-[#7d9acb]" />
        <div className="flex min-w-0 flex-1 flex-col bg-black">
          <div className="flex">
            <MenuBar />
            <Brand />
          </div>
          <div className="flex">
            <Sidebar />
            <Canvas />
            <RightPanel />
          </div>
          <StatusBar />
          <div className="h-[31px] shrink-0 border-t-2 border-[#6f8a8a] bg-[#d9ffff]">
            <div className="ml-[2px] h-[28px] border border-r-0 border-black bg-[#b2ffff]">
              <div className="h-full border-3 border-r-0 border-t-[#d9ffff] border-l-[#d9ffff] border-b-[#d9ffff]">
                <div className="h-full border-b-2 border-[#609898]" />
              </div>
            </div>
          </div>
        </div>
      </div>
      <div className="h-[8px] shrink-0 border-y border-t-[#4b5870] border-b-[#dbe7f7] bg-linear-to-r from-[#7d9acb] via-[#5c86c4] to-[#4f77b0]" />
      <Taskbar />
      <PopviewTwo />
      <PopviewOne />
    </div>
  );
}

export default App;
